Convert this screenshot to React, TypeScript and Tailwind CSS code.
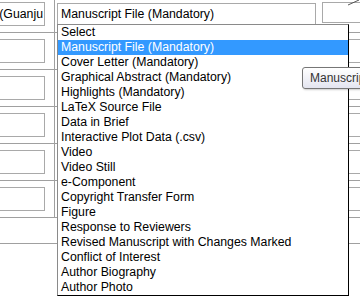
import React from "react"

const options = [
  "Select",
  "Manuscript File (Mandatory)",
  "Cover Letter (Mandatory)",
  "Graphical Abstract (Mandatory)",
  "Highlights (Mandatory)",
  "LaTeX Source File",
  "Data in Brief",
  "Interactive Plot Data (.csv)",
  "Video",
  "Video Still",
  "e-Component",
  "Copyright Transfer Form",
  "Figure",
  "Response to Reviewers",
  "Revised Manuscript with Changes Marked",
  "Conflict of Interest",
  "Author Biography",
  "Author Photo",
]

const selected = 1

function FormRow({ first }: { first?: boolean }) {
  return (
    <div className="grid h-[37px] grid-cols-[55px_261px_1fr] border-b border-[#a0a0a0]">
      <div className="flex items-center overflow-hidden border-r border-[#a0a0a0]">
        <div className="-ml-[20px] flex h-[24px] w-[65px] shrink-0 items-center justify-end overflow-hidden whitespace-nowrap border border-[#a9a9a9] pr-[1px]">
          {first ? "(Guanju" : ""}
        </div>
      </div>
      <div className="flex items-center pl-[2px]">
        {first && (
          <div className="flex h-[23px] w-[259px] items-center border border-[#a9a9a9] pl-[3px]">
            Manuscript File (Mandatory)
          </div>
        )}
      </div>
      <div className={first ? "pl-[6px] pt-[6px]" : "flex items-center pl-[6px]"}>
        <div className={first ? "h-[21px] w-[60px] border border-[#a9a9a9]" : "h-[24px] w-[60px] border border-[#a9a9a9]"} />
      </div>
    </div>
  )
}

export default function App() {
  return (
    <div className="relative h-[297px] w-[360px] overflow-hidden bg-white font-['Liberation_Sans',Arial,sans-serif] text-[12.3px] leading-[15px] text-black">
      <div className="-mt-[4px] flex flex-col">
        <FormRow first />
        <FormRow />
        <FormRow />
        <FormRow />
        <FormRow />
        <FormRow />
        <div className="h-[26px] border-b border-[#a0a0a0]" />
      </div>

      {/* bit of a graphic peeking in at top right */}
      <svg className="absolute left-[346px] top-0" width="14" height="6" viewBox="0 0 14 6">
        <path d="M2 5 L13 0" stroke="#555" strokeWidth="1" fill="none" />
      </svg>

      {/* open dropdown */}
      <div className="absolute left-[57px] top-[24px] h-[272px] w-[292px] border border-b-black border-l-[#8a8a8a] border-r-black border-t-[#8a8a8a] bg-white">
        {options.map((o, i) => (
          <div
            key={o}
            className={
              i === selected
                ? "h-[15px] whitespace-nowrap bg-[#3399ff] pl-[3px] text-white"
                : "h-[15px] whitespace-nowrap pl-[3px]"
            }
          >
            {o}
          </div>
        ))}
      </div>

      {/* tooltip, runs off the right edge like in the capture */}
      <div className="absolute left-[302px] top-[67px] flex h-[22px] w-[180px] items-center whitespace-nowrap rounded-[3px] border border-[#767676] bg-gradient-to-b from-white to-[#e4e5f0] pl-[7px] text-[12px] text-[#333] shadow-[1px_1px_2px_rgba(0,0,0,0.2)]">
        Manuscript File (Mandatory)
      </div>
    </div>
  )
}
